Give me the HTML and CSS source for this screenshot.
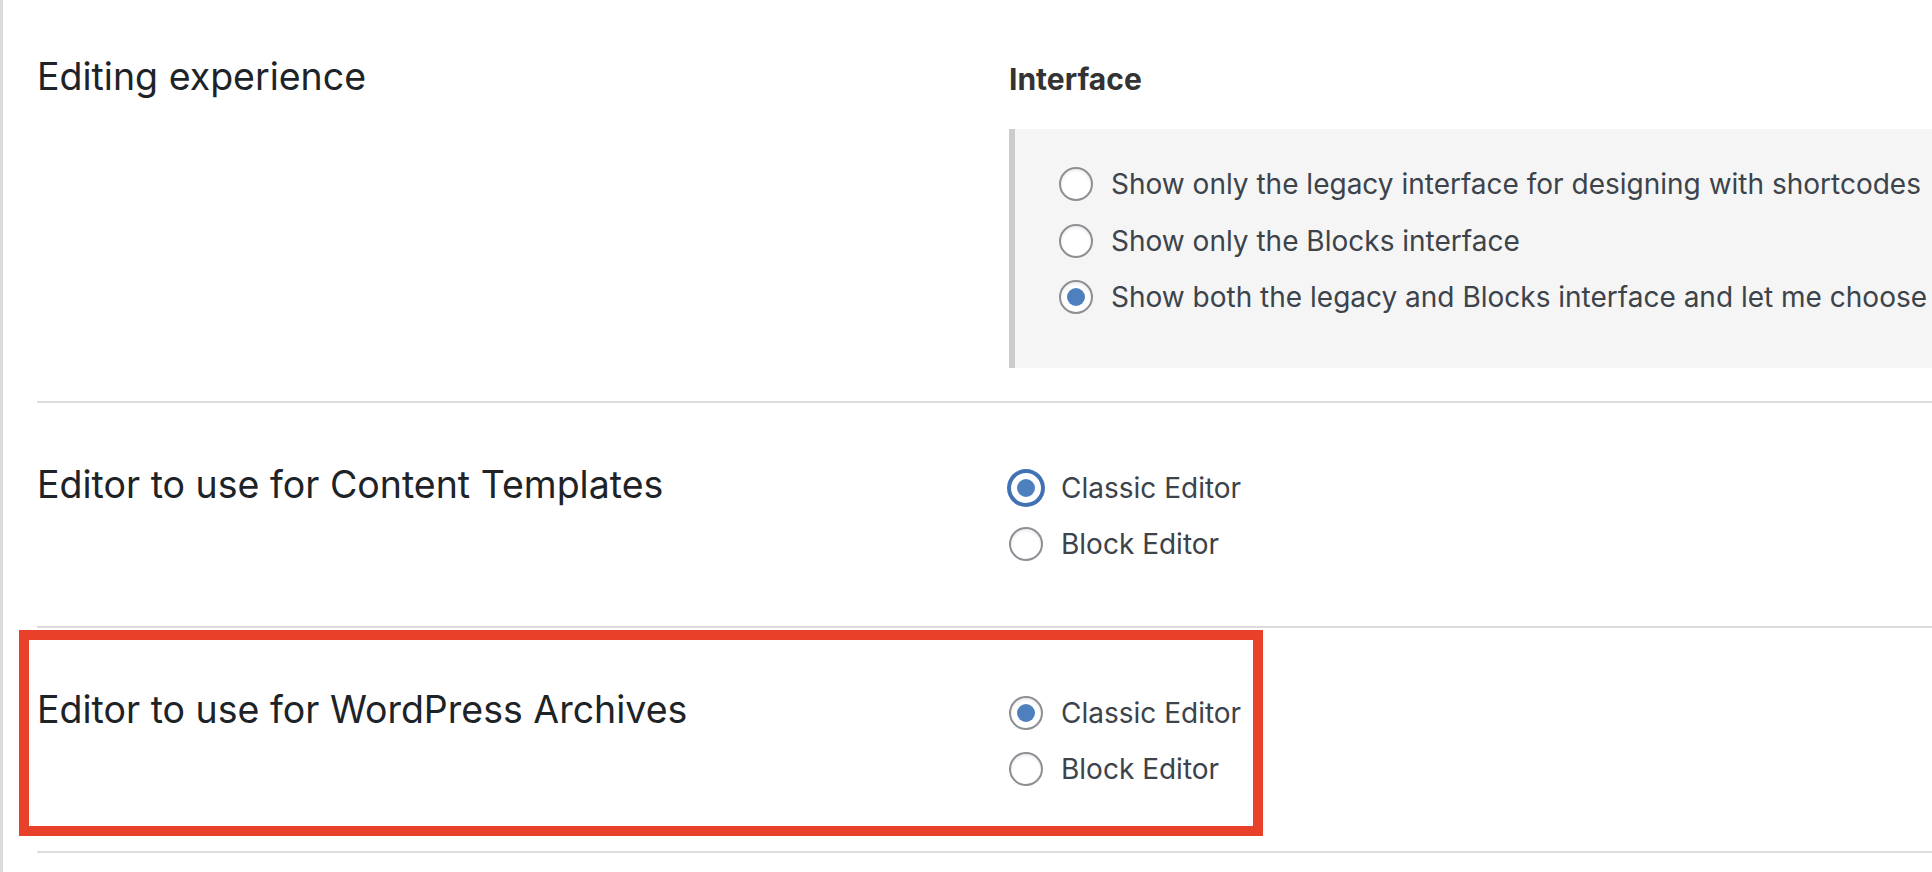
FILE: index.html
```html
<!DOCTYPE html>
<html lang="en">
  <head>
    <meta charset="UTF-8" />
    <meta name="viewport" content="width=device-width, initial-scale=1.0" />
    <link rel="stylesheet" href="styles.css">
    <title>Settings - Editing experience</title>
  </head>
  <body>
    <div class="settings">
      <div class="row row-first">
        <div class="row-title">Editing experience</div>
        <div class="row-field">
          <div class="group-title">Interface</div>
          <div class="option-box">
            <label class="option">
              <input type="radio" name="interface" value="legacy" />
              Show only the legacy interface for designing with shortcodes
            </label>
            <label class="option">
              <input type="radio" name="interface" value="blocks" />
              Show only the Blocks interface
            </label>
            <label class="option">
              <input type="radio" name="interface" value="both" checked />
              Show both the legacy and Blocks interface and let me choose
            </label>
          </div>
        </div>
      </div>

      <div class="row">
        <div class="row-title">Editor to use for Content Templates</div>
        <div class="row-field">
          <label class="option">
            <input type="radio" name="ct-editor" value="classic" class="focused" checked />
            Classic Editor
          </label>
          <label class="option">
            <input type="radio" name="ct-editor" value="block" />
            Block Editor
          </label>
        </div>
      </div>

      <div class="row">
        <div class="highlight"></div>
        <div class="row-title">Editor to use for WordPress Archives</div>
        <div class="row-field">
          <label class="option">
            <input type="radio" name="wpa-editor" value="classic" checked />
            Classic Editor
          </label>
          <label class="option">
            <input type="radio" name="wpa-editor" value="block" />
            Block Editor
          </label>
        </div>
      </div>
    </div>
  </body>
</html>
```

FILE: styles.css
```css
body {
  margin: 0;
  padding: 0;
  height: 100vh;
  overflow: hidden;
  background-color: white;
  font-family: "Inter", "Liberation Sans", sans-serif;
}

.settings {
  min-height: 100vh;
  border-left: 3px solid #dcdcde;
  padding-left: 34px;
}

.row {
  position: relative;
  display: flex;
  border-bottom: 2px solid #dcdcde;
  white-space: nowrap;
}

.row-title {
  width: 972px;
  flex-shrink: 0;
  padding-top: 58px;
  font-size: 37.5px;
  line-height: 1.3;
  color: #1d2327;
}

.row-field {
  flex: 1;
  padding: 57px 0 54px;
}

.row-first .row-title {
  padding-top: 53px;
}

.row-first .row-field {
  padding: 52px 0 33px;
}

.group-title {
  margin-top: 8px;
  font-size: 30px;
  font-weight: 700;
  line-height: 39px;
  color: #333;
}

.option-box {
  margin-top: 30px;
  padding: 27px 0 42px 44px;
  background-color: #f5f5f5;
  border-left: 6px solid #ccc;
}

.option-box .option {
  height: 56.5px;
}

.option {
  display: flex;
  align-items: center;
  gap: 18px;
  height: 56px;
  font-size: 28px;
  color: #3c434a;
}

input[type="radio"] {
  appearance: none;
  -webkit-appearance: none;
  margin: 0;
  width: 34px;
  height: 34px;
  flex-shrink: 0;
  border: 2px solid #8c8f94;
  border-radius: 50%;
  background-color: white;
  box-shadow: inset 0 2px 3px rgba(0, 0, 0, 0.08);
  display: flex;
  align-items: center;
  justify-content: center;
}

input[type="radio"]:checked::before {
  content: "";
  width: 18px;
  height: 18px;
  border-radius: 50%;
  background-color: #4f80be;
}

input[type="radio"].focused {
  border-color: #4172b4;
  box-shadow: 0 0 0 2px #4172b4;
}

/* red frame drawn around the archives row */
.highlight {
  position: absolute;
  left: -18px;
  top: 2px;
  width: 1224px;
  height: 186px;
  border: 10px solid #e9402a;
  pointer-events: none;
}
```
